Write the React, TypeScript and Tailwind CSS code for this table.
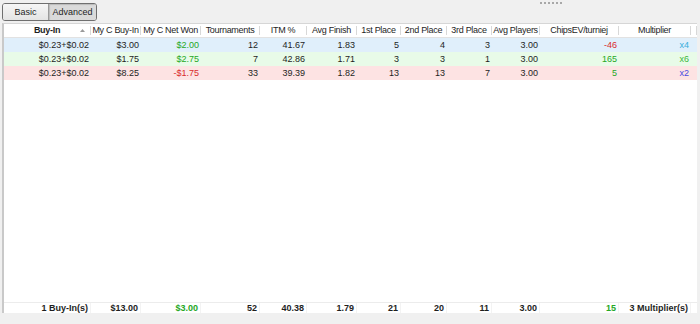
import React from 'react';

const cols = [
  'Buy-In',
  'My C Buy-In',
  'My C Net Won',
  'Tournaments',
  'ITM %',
  'Avg Finish',
  '1st Place',
  '2nd Place',
  '3rd Place',
  'Avg Players',
  'ChipsEV/turniej',
  'Multiplier',
];

const grid =
  'grid grid-cols-[87px_50px_60px_59px_47px_50px_44px_46px_45px_48px_79px_72px_1fr]';

type Cell = { v: string; c?: string };

const rows: { bg: string; cells: Cell[] }[] = [
  {
    bg: 'bg-[#e0effb]',
    cells: [
      { v: '$0.23+$0.02' },
      { v: '$3.00' },
      { v: '$2.00', c: 'text-[#25a825]' },
      { v: '12' },
      { v: '41.67' },
      { v: '1.83' },
      { v: '5' },
      { v: '4' },
      { v: '3' },
      { v: '3.00' },
      { v: '-46', c: 'text-[#d92b2b]' },
      { v: 'x4', c: 'text-[#3aaedb]' },
    ],
  },
  {
    bg: 'bg-[#e8fbe8]',
    cells: [
      { v: '$0.23+$0.02' },
      { v: '$1.75' },
      { v: '$2.75', c: 'text-[#25a825]' },
      { v: '7' },
      { v: '42.86' },
      { v: '1.71' },
      { v: '3' },
      { v: '3' },
      { v: '1' },
      { v: '3.00' },
      { v: '165', c: 'text-[#25a825]' },
      { v: 'x6', c: 'text-[#3cb83c]' },
    ],
  },
  {
    bg: 'bg-[#fde3e3]',
    cells: [
      { v: '$0.23+$0.02' },
      { v: '$8.25' },
      { v: '-$1.75', c: 'text-[#d92b2b]' },
      { v: '33' },
      { v: '39.39' },
      { v: '1.82' },
      { v: '13' },
      { v: '13' },
      { v: '7' },
      { v: '3.00' },
      { v: '5', c: 'text-[#25a825]' },
      { v: 'x2', c: 'text-[#4a4ae0]' },
    ],
  },
];

const totals: Cell[] = [
  { v: '1 Buy-In(s)' },
  { v: '$13.00' },
  { v: '$3.00', c: 'text-[#25a825]' },
  { v: '52' },
  { v: '40.38' },
  { v: '1.79' },
  { v: '21' },
  { v: '20' },
  { v: '11' },
  { v: '3.00' },
  { v: '15', c: 'text-[#25a825]' },
  { v: '3 Multiplier(s)' },
];

export default function App() {
  return (
    <div className="w-[700px] h-[324px] bg-[#f0f0f0] flex flex-col text-[9px] leading-none text-[#1e1e1e] font-['Liberation_Sans',Arial,sans-serif] overflow-hidden">
      {/* top bar */}
      <div className="h-[23px] flex items-start pt-[3px] pl-[2px] relative">
        <div className="flex h-[18px] border border-[#6f6f6f] rounded-[3px] overflow-hidden">
          <div className="w-[46px] flex items-center justify-center bg-gradient-to-b from-[#f6f6f6] to-[#e4e4e4] border-r border-[#9a9a9a]">
            Basic
          </div>
          <div className="w-[47px] flex items-center justify-center bg-[#dadada] shadow-[inset_1px_1px_1px_rgba(0,0,0,0.15)]">
            Advanced
          </div>
        </div>
        <div className="absolute left-[540px] top-[2px] flex gap-[2px]">
          {[0, 1, 2, 3, 4, 5].map((i) => (
            <span key={i} className="w-[2px] h-[2px] bg-[#a8a8a8]" />
          ))}
        </div>
      </div>

      {/* table */}
      <div className="ml-[2px] w-[695px] h-[290px] bg-white border-l-2 border-l-[#c9c9c9] border-t border-t-[#d6d6d6] flex flex-col">
        <div className={`${grid} h-[14px] border-b border-[#e2e2e2]`}>
          {cols.map((c, i) => (
            <div
              key={c}
              className="relative flex items-center justify-center border-r border-[#d8d8d8] my-[2px] whitespace-nowrap overflow-visible tracking-[-0.3px]"
            >
              <span className={i === 0 ? 'font-bold' : ''}>{c}</span>
              {i === 0 && (
                <svg
                  className="absolute right-[5px] top-[3px]"
                  width="5"
                  height="3"
                  viewBox="0 0 5 3"
                >
                  <path d="M2.5 0 L5 3 L0 3 Z" fill="#9a9a9a" />
                </svg>
              )}
            </div>
          ))}
          <div className="border-r border-[#d8d8d8] my-[2px]" />
        </div>

        {rows.map((r, ri) => (
          <div key={ri} className={`${grid} h-[14px] ${r.bg}`}>
            {r.cells.map((c, i) => (
              <div
                key={i}
                className={`flex items-center justify-end pr-[2px] whitespace-nowrap ${c.c ?? ''}`}
              >
                {c.v}
              </div>
            ))}
            <div />
          </div>
        ))}

        <div className="flex-1" />

        <div className={`${grid} h-[11px] border-t border-[#ececec] font-bold`}>
          {totals.map((c, i) => (
            <div
              key={i}
              className={`flex items-center justify-end pr-[2px] whitespace-nowrap border-r border-[#f3f3f3] ${c.c ?? ''}`}
            >
              {c.v}
            </div>
          ))}
          <div />
        </div>
      </div>
    </div>
  );
}
